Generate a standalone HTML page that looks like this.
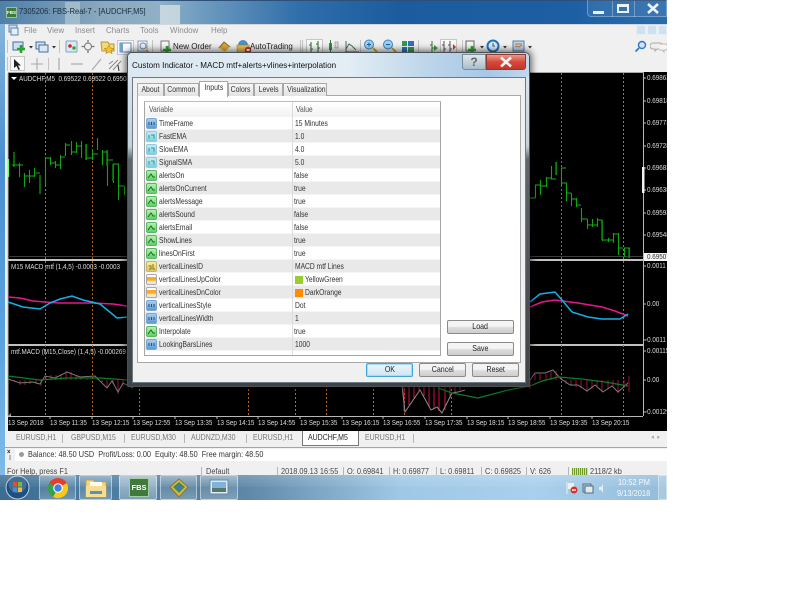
<!DOCTYPE html>
<html><head><meta charset="utf-8"><title>MT4</title>
<style>
html,body{margin:0;padding:0;background:#fff;width:800px;height:599px;overflow:hidden}
*{box-sizing:border-box}
#s{position:absolute;left:0;top:0;width:667px;height:500px;overflow:hidden;background:#f0f0f0;font-family:"Liberation Sans",sans-serif;font-size:7.9px;color:#333;filter:blur(.3px);--x:.85}
.a,.t{position:absolute}
.t{white-space:nowrap;line-height:10px;height:10px;transform:scaleX(var(--x));transform-origin:0 0}
.w{color:#dcdcdc;font-size:7.4px}
.m{color:#8c8c8c;font-size:8.4px;--x:.95}
.tb{color:#777;font-size:8.2px}
.st{color:#444;font-size:8px;--x:.92}
.sep{position:absolute;width:1px;background:#b5b5b5}
.r{position:absolute;left:145px;width:295px;height:13px;border-bottom:1px solid #f4f4f4}
.r.g{background:#e9e9e9}
.ic{position:absolute;left:146px;width:11px;height:11px;border-radius:2px}
.b{background:linear-gradient(#a9cdec,#5d9ad2);border:1px solid #7aa7d0}
.c{background:linear-gradient(#c2eef3,#79d0de);border:1px solid #8fcbd8}
.gr{background:linear-gradient(#b6f0b0,#5fd065);border:1px solid #5cb562}
.y{background:linear-gradient(#f7eda0,#dcc862);border:1px solid #c5b66a}
.o{background:linear-gradient(#fff 0 25%,#ffa830 25% 60%,#f3e040 60% 75%,#e8e8e8 75%);border:1px solid #aaa}
.ic svg{position:absolute;left:0;top:0}
.btn{position:absolute;border:1px solid #8b8b8b;border-radius:2px;background:linear-gradient(#f4f4f4 0 45%,#dcdcdc 55%,#cfcfcf);text-align:center;font-size:8.2px;line-height:12px;color:#222}
.tab{position:absolute;top:83px;height:13px;background:linear-gradient(#f6f6f6,#e2e2e2);border:1px solid #a8a8a8;border-bottom:0;text-align:center;font-size:8px;line-height:12px;color:#333}
.btn span,.tab span{display:inline-block;transform:scaleX(.86);transform-origin:50% 50%}
.tk{position:absolute;top:475px;height:25px;border:1px solid rgba(255,255,255,.45);border-radius:2px;background:linear-gradient(rgba(255,255,255,.32),rgba(255,255,255,.1) 50%,rgba(255,255,255,.22))}
</style></head><body>
<div id="s">
<!-- title bar -->
<div class="a" style="left:0;top:0;width:667px;height:24px;background:linear-gradient(90deg,#4f7fa8 0,#8aa8bd 15%,#8fb0c6 24%,#6f9cc0 30%,#2f6ea9 45%,#1c5c9e 60%,#1d5fa3 85%,#2a6cad 100%)"></div>
<div class="a" style="left:160px;top:5px;width:20px;height:19px;background:#d4e0e4;opacity:.8"></div>
<div class="a" style="left:65px;top:2px;width:15px;height:22px;background:#b9cfd9;opacity:.6"></div>
<div class="a" style="left:0;top:0;width:667px;height:1px;background:#2d4f78"></div>
<div class="a" style="left:6px;top:7px;width:11px;height:11px;background:#3b7d3a;border:1px solid #9cc09b;color:#fff;font-size:4.5px;line-height:9px;text-align:center;font-weight:bold">FBS</div>
<div class="t" style="left:19px;top:6px;color:#1b2b3a;font-size:8.6px;--x:.875">7305206: FBS-Real-7 - [AUDCHF,M5]</div>
<div class="a" style="left:587px;top:0;width:80px;height:17px;border:1px solid rgba(255,255,255,.3);border-top:0;border-radius:0 0 0 4px;background:rgba(255,255,255,.08)"></div>
<div class="a" style="left:612px;top:1px;width:1px;height:16px;background:rgba(255,255,255,.3)"></div>
<div class="a" style="left:634px;top:1px;width:1px;height:16px;background:rgba(255,255,255,.3)"></div>
<div class="a" style="left:593px;top:11px;width:11px;height:3px;background:#eaf1f7"></div>
<div class="a" style="left:617px;top:4px;width:12px;height:9px;border:2px solid #eaf1f7;border-top-width:3px"></div>
<svg class="a" style="left:646px;top:3px" width="14" height="11"><path d="M2 1 L12 10 M12 1 L2 10" stroke="#eef3f7" stroke-width="2.6"/></svg>

<!-- left frame -->
<div class="a" style="left:0;top:24px;width:5px;height:451px;background:linear-gradient(#84b5dc,#4a8fd0 30%,#5aa3e0 70%,#7fbbe8)"></div>
<div class="a" style="left:5px;top:24px;width:662px;height:1px;background:#cfd6dc"></div>

<!-- menu -->
<svg class="a" style="left:8px;top:24px" width="11" height="12"><rect x="1" y="1" width="8" height="7" fill="#cfe0f0" stroke="#5a86b5"/><rect x="3" y="4" width="7" height="7" fill="#e6eff8" stroke="#5a86b5"/></svg>
<div class="t m" style="left:24px;top:25px">File</div>
<div class="t m" style="left:47px;top:25px">View</div>
<div class="t m" style="left:75px;top:25px">Insert</div>
<div class="t m" style="left:106px;top:25px">Charts</div>
<div class="t m" style="left:140px;top:25px">Tools</div>
<div class="t m" style="left:170px;top:25px">Window</div>
<div class="t m" style="left:211px;top:25px">Help</div>
<div class="a" style="left:636px;top:25px;width:10px;height:10px;background:#cfe0ee;border:1px solid #e5eef5"></div>
<div class="a" style="left:647px;top:25px;width:10px;height:10px;background:#cfe0ee;border:1px solid #e5eef5"></div>
<div class="a" style="left:658px;top:25px;width:9px;height:10px;background:#cfe0ee;border:1px solid #e5eef5"></div>

<!-- toolbar icons -->
<svg class="a" style="left:5px;top:37px" width="660" height="36">
<g stroke="#c4c4c4"><path d="M2.500 3V16M54.500 3V16M147.500 3V16M295.500 3V16M297.500 3V16M355.500 3V16M413.500 3V16M457.500 3V16M2.500 20V34M43.500 21V33"/></g>
<rect x="112.500" y="3.500" width="16" height="14" fill="#f8f8f8" stroke="#c6c6c6"/>
<rect x="301.500" y="2.500" width="16" height="15" fill="#f8f8f8" stroke="#c6c6c6"/>
<rect x="435.500" y="2.500" width="16" height="15" fill="#f8f8f8" stroke="#c6c6c6"/>
<rect x="5.500" y="19.500" width="14" height="14" fill="#f8f8f8" stroke="#c6c6c6"/>
<rect x="8" y="5" width="10" height="8" fill="#cde0f2" stroke="#44709e"/><path d="M16 8V16M12 12H20" stroke="#2aa52a" stroke-width="2.6"/>
<path d="M24 9h4l-2 2.500z" fill="#333"/>
<rect x="31" y="5" width="9" height="7" fill="#cfe0f0" stroke="#44709e"/><rect x="34" y="8" width="9" height="7" fill="#dbe8f4" stroke="#44709e"/><path d="M47 9h4l-2 2.500z" fill="#333"/>
<rect x="61" y="4" width="11" height="11" rx="1" fill="#d8e8f6" stroke="#7ea3c5"/><circle cx="65" cy="9" r="1.800" fill="#d22"/><circle cx="69" cy="11" r="1.800" fill="#3a3"/>
<path d="M83 3V16M76.500 9.500H89.500" stroke="#777" stroke-width="1.300"/><circle cx="83" cy="9.500" r="3.500" fill="#eee" stroke="#777"/>
<path d="M96 5h7l1 2h5v7H97z" fill="#f2d975" stroke="#b5963c"/><path d="M104 8l1.500 3 3.200.5-2.300 2 .6 3-3-1.600-3 1.600.6-3-2.300-2 3.200-.5z" fill="#f4c430" stroke="#b08a20" stroke-width=".6"/>
<rect x="115" y="6" width="11" height="9" fill="#fff" stroke="#5d8abb"/><rect x="115" y="6" width="3" height="9" fill="#6fa3d6"/>
<rect x="133" y="4" width="9" height="10" fill="#eef2f6" stroke="#8ca0b5"/><circle cx="138" cy="9" r="3" fill="none" stroke="#6b8bb0"/><path d="M141 13l4 4" stroke="#c69a2c" stroke-width="1.600"/>
<rect x="156" y="4" width="8" height="10" fill="#f6f6f6" stroke="#777"/><path d="M162 9V17M158 13H166" stroke="#2aa52a" stroke-width="2.600"/>
<path d="M214 11l5-6 6 5-5 5z" fill="#dba83a" stroke="#8a6a1e"/><path d="M214 11l6 4 5-5" fill="none" stroke="#fbe9a8"/>
<circle cx="238" cy="8" r="5" fill="#4f8cc8"/><path d="M232 8h12v5a6 4 0 0 1-12 0z" fill="#e6c04d" stroke="#a2832a" stroke-width=".6"/><circle cx="243" cy="13" r="3.300" fill="#d92d20"/><rect x="241.600" y="12" width="3" height="2" fill="#fff"/>
<path d="M306 5V15M306 8h-2M306 12h2M313 4V15M313 7h-2M313 11h2" stroke="#3b6f3b" stroke-width="1.100" fill="none"/><path d="M303 16h13" stroke="#666"/>
<rect x="324" y="6" width="3" height="7" fill="#2f9e3a"/><path d="M325.500 3V16" stroke="#2f7a36"/><rect x="330" y="5" width="3" height="6" fill="#ddd" stroke="#888" stroke-width=".6"/><path d="M322 16h13" stroke="#666"/>
<path d="M341 15V4M341 15H354M341 12l3-5 3 2 4 4" stroke="#3f7050" fill="none"/>
<circle cx="364" cy="7.500" r="4.500" fill="#9cd0ee" stroke="#3d86c2"/><path d="M362 7.500h4M364 5.500v4" stroke="#1d5f9f"/><path d="M368 11l4 4" stroke="#c9a130" stroke-width="2"/>
<circle cx="383" cy="7.500" r="4.500" fill="#9cd0ee" stroke="#3d86c2"/><path d="M381 7.500h4" stroke="#1d5f9f"/><path d="M387 11l4 4" stroke="#c9a130" stroke-width="2"/>
<rect x="397" y="4" width="5" height="5" fill="#2f9a55"/><rect x="403" y="4" width="6" height="5" fill="#2f6fc0"/><rect x="397" y="10" width="5" height="5" fill="#2f6fc0"/><rect x="403" y="10" width="6" height="5" fill="#2f9a55"/>
<path d="M427 4V15M427 8h-2M427 11h2" stroke="#3b6f3b" fill="none"/><path d="M421 16h13" stroke="#666"/><path d="M429 8l4 3-4 3z" fill="#3a9a3a"/>
<path d="M439 4V16M439 8h-2M439 12h2M445 4V16M445 8h-2M445 12h2" stroke="#555" fill="none"/><path d="M448 7l3 3-3 3z" fill="#d23d2a"/>
<rect x="461" y="4" width="8" height="10" fill="#f4f4f4" stroke="#666"/><path d="M467 9V17M463 13H471" stroke="#2aa52a" stroke-width="2.600"/><path d="M475 9h4l-2 2.500z" fill="#333"/>
<circle cx="488" cy="9" r="5.500" fill="#dcebf7" stroke="#1d74bc" stroke-width="2"/><path d="M488 6v3h2" stroke="#1d5f9f" fill="none"/><path d="M498 9h4l-2 2.500z" fill="#333"/>
<rect x="508" y="4" width="11" height="10" fill="#bcd5ec" stroke="#5d7ea0"/><path d="M510 7h7M510 10l2-1 2 1 3-2" stroke="#b67a2e" fill="none"/><path d="M523 9h4l-2 2.500z" fill="#333"/>
<path d="M9 22V31l2.500-2 2 4 1.500-.8-2-3.700h3z" fill="#222"/>
<path d="M32 21V33M26 27H38" stroke="#aaa" stroke-width="1.100"/>
<path d="M54 21V33" stroke="#aaa" stroke-width="1.200"/><path d="M66 27H78" stroke="#aaa" stroke-width="1.200"/><path d="M87 33L96 22" stroke="#aaa" stroke-width="1.200"/>
<path d="M104 32l9-9M108 33l8-9M104 27l4-3" stroke="#888" fill="none"/><path d="M113 28l1 6" stroke="#333"/>
<circle cx="637" cy="8" r="3.500" fill="#cfe4f6" stroke="#2f78c2" stroke-width="1.400"/><path d="M634 11l-3.500 3.500" stroke="#2f78c2" stroke-width="1.800"/>
</svg>
<div class="t tb" style="left:173px;top:41px;color:#222;font-size:8.6px;--x:.93">New Order</div>
<div class="t tb" style="left:250px;top:41px;color:#222;font-size:8.6px;--x:.92">AutoTrading</div>
<svg class="a" style="left:650px;top:41px" width="17" height="12"><path d="M3 2h7a2 2 0 0 1 0 6H7l-2 2V8H3a2 2 0 0 1 0-6z" fill="#eee" stroke="#aaa"/><path d="M10 3h5a2 2 0 0 1 0 6h-1v2l-2-2h-3" fill="#f4f4f4" stroke="#bbb"/></svg>

<!-- chart -->
<div class="a" style="left:8px;top:72px;width:659px;height:359px;background:#000"></div>
<div class="a" style="left:8px;top:72px;width:636px;height:1px;background:#a8a8a8"></div>
<svg class="a" style="left:0;top:0" width="667" height="432" fill="none">
<path d="M8 73V416M643.500 73V416M8 416.500H643" stroke="#b8b8b8"/>
<path d="M8 256.500H643" stroke="#3c3c3c"/>
<path d="M8 260H643M8 345H643" stroke="#c0c0c0" stroke-width="2"/>
<g stroke-dasharray="2 2">
<path d="M45.500 73V416M139.500 73V416M295.500 73V416M373.500 73V416M451.500 73V416M623.500 73V416" stroke="#7c8a1a"/>
<path d="M92.500 73V416M248.500 73V416M326.500 73V416M404.500 73V416M561.500 73V416" stroke="#b5640e"/>
</g>
<path d="M8.500 159V177" stroke="#66ff66" stroke-width="1.200"/>
<path stroke="#0fa50f" stroke-width="1.100" d="M19.500 163V177M24.500 173V187M29.500 170V183M34.500 168V177M45.500 158V186M50.500 157V165M55.500 161V168M60.500 155V169M65.500 143V156M71.500 141V155M76.500 142V153M81.500 141V158M86.500 144V160M92.500 149V160M97.500 138V150M102.500 150V165M107.500 150V186M113.500 164V183M118.500 164V200M124.500 186V195"/>
<path stroke="#0a7a0a" stroke-width="1.600" d="M14 152V167M40 175V194M86 144V160M107 150V166M113 164V181"/>
<path stroke="#12b012" stroke-width="1" d="M12 165h7M19 165h4M24 176h6M29 176h5M36 173h4M45 158h6M50 163h5M55 165h5M60 157h5M65 145h5M71 152h5M76 146h6M86 158h6M92 154h6M102 152h5M107 160h6M113 164h6M118 186h6"/>
<path stroke="#0fa50f" stroke-width="1.100" d="M535.500 185V198M540.500 180V195M546.500 177V187M551.500 166V179M556.500 162V175M561.500 168V185M566.500 183V201M571.500 193V206M576.500 198V207M581.500 208V222M587.500 219V229M592.500 219V227M597.500 218V227M602.500 220V241M608.500 238V242M613.500 233V243M618.500 233V255M624.500 248V257M629.500 248V258"/>
<path stroke="#0a7a0a" stroke-width="1.600" d="M556 162V175M602 220V240M629 248V258"/>
<path stroke="#12b012" d="M530 198h5M535 185h6M541 186h5M546 178h5M551 179h5M561 168h5M561 183h6M566 193h5M571 199h5M576 205h5M581 219h6M587 225h5M592 225h5M597 220h5M602 240h6M608 240h5M613 234h5M618 248h5M624 248h6"/>
<path stroke="#e8168c" stroke-width="1.500" d="M8 297L20 298L33 301L45 302L60 303L93 303L113 304L127 306"/>
<path stroke="#12b2e8" stroke-width="1.500" d="M8 302L23 307L40 309L50 303L60 299L72 296L83 300L100 304L117 318L128 317"/>
<path stroke="#e8168c" stroke-width="1.500" d="M530 307L542 302L555 300L578 303L602 307L615 311L628 316"/>
<path stroke="#12b2e8" stroke-width="1.500" d="M530 302L540 294L555 292L562 300L572 312L588 317L602 319L620 319L628 314"/>
<path stroke="#a01235" d="M14.500 380V381M20 380V385M25 380V385M30 380V384M36 380V384M41 380V386M46 380V376M51 380V375M56 380V375M61 380V374M66 380V371M71 380V372M76 380V375M81 380V377M87 380V379M97 380V377M102 380V382M107 380V388M113 380V384M118 380V394M123 380V386M128 380V388"/>
<path stroke="#a01235" d="M530 380V389M535 380V374M540 380V374M546 380V374M551 380V372M556 380V371M561 380V378M566 380V384M571 380V386M576 380V387M581 380V388M587 380V392M592 380V389M597 380V387M602 380V392M608 380V389M613 380V387M618 380V393M624 380V388M629 376V392"/>
<path stroke="#c2153f" stroke-width="1.100" d="M404 387V411M409 387V405M414 387V398M419 387V392M424 387V396M429 387V407M434 387V409M439 387V411M445 387V410M450 387V398M455 387V392M460 387V390"/>
<path stroke="#7a7a7a" d="M8 379L20 383L33 382L40 384L45 376L55 378L67 372L80 377L95 376L107 388L112 381L118 392L123 383L133 388"/>
<path stroke="#7a7a7a" d="M525 387L535 373L545 373L553 370L560 378L570 385L578 385L587 391L595 385L603 392L612 386L618 392L628 383"/>
<path stroke="#8d8d8d" d="M402 386L405 412L420 390L431 410L437 407L442 413L452 393L458 392L465 390"/>
<path stroke="#0f7d22" stroke-width="1.200" d="M8 376L40 380L67 378L100 378L128 380"/>
<path stroke="#0f7d22" stroke-width="1.200" d="M438 388L452 393L478 398L508 390L530 386L542 381L558 377L582 379L605 382L628 386"/>
<path d="M8 416l3-3v3z" fill="#8a96b0"/>
<g stroke="#bbb"><path d="M50 416V419M92 416V419M133 416V419M175 416V419M217 416V419M258 416V419M300 416V419M342 416V419M383 416V419M425 416V419M467 416V419M508 416V419M550 416V419M592 416V419M643 78H646M643 101H646M643 123H646M643 146H646M643 168H646M643 190H646M643 213H646M643 235H646M643 266H646M643 304H646M643 340H646M643 351H646M643 380H646M643 412H646"/></g>
<rect x="642" y="167" width="2.500" height="26" fill="#f2f2f2"/>
<path d="M11 77h6l-3 3z" fill="#fff"/>
</svg>
<div class="t w" style="left:19px;top:74px">AUDCHF,M5&nbsp; 0.69522 0.69522 0.69503</div>
<div class="t w" style="left:11px;top:262px">M15 MACD mtf (1,4,5) -0.0003 -0.0003</div>
<div class="t w" style="left:11px;top:347px">mtf.MACD (M15,Close) (1,4,5) -0.000269</div>
<div class="t w" style="left:647px;top:73px">0.69863</div>
<div class="t w" style="left:647px;top:96px">0.69818</div>
<div class="t w" style="left:647px;top:118px">0.69773</div>
<div class="t w" style="left:647px;top:141px">0.69728</div>
<div class="t w" style="left:647px;top:163px">0.69683</div>
<div class="t w" style="left:647px;top:185px">0.69638</div>
<div class="t w" style="left:647px;top:208px">0.69593</div>
<div class="t w" style="left:647px;top:230px">0.69548</div>
<div class="a" style="left:644px;top:253px;width:23px;height:8px;background:#f4f4f4"></div>
<div class="t" style="left:647px;top:252px;color:#333;font-size:7.4px">0.69507</div>
<div class="t w" style="left:647px;top:261px">0.0011</div>
<div class="t w" style="left:647px;top:299px">0.00</div>
<div class="t w" style="left:645px;top:335px">-0.0011</div>
<div class="t w" style="left:647px;top:346px">0.00115</div>
<div class="t w" style="left:647px;top:375px">0.00</div>
<div class="t w" style="left:645px;top:407px">-0.00129</div>
<div class="t w" style="left:8px;top:418px">13 Sep 2018</div>
<div class="t w" style="left:50px;top:418px">13 Sep 11:35</div>
<div class="t w" style="left:92px;top:418px">13 Sep 12:15</div>
<div class="t w" style="left:133px;top:418px">13 Sep 12:55</div>
<div class="t w" style="left:175px;top:418px">13 Sep 13:35</div>
<div class="t w" style="left:217px;top:418px">13 Sep 14:15</div>
<div class="t w" style="left:258px;top:418px">13 Sep 14:55</div>
<div class="t w" style="left:300px;top:418px">13 Sep 15:35</div>
<div class="t w" style="left:342px;top:418px">13 Sep 16:15</div>
<div class="t w" style="left:383px;top:418px">13 Sep 16:55</div>
<div class="t w" style="left:425px;top:418px">13 Sep 17:35</div>
<div class="t w" style="left:467px;top:418px">13 Sep 18:15</div>
<div class="t w" style="left:508px;top:418px">13 Sep 18:55</div>
<div class="t w" style="left:550px;top:418px">13 Sep 19:35</div>
<div class="t w" style="left:592px;top:418px">13 Sep 20:15</div>

<!-- tab row -->
<div class="a" style="left:5px;top:431px;width:662px;height:17px;background:#f0f0f0;border-bottom:1px solid #a5a5a5"></div>
<div class="t tb" style="left:16px;top:433px">EURUSD,H1</div><div class="sep" style="left:62px;top:434px;height:9px"></div>
<div class="t tb" style="left:71px;top:433px">GBPUSD,M15</div><div class="sep" style="left:124px;top:434px;height:9px"></div>
<div class="t tb" style="left:131px;top:433px">EURUSD,M30</div><div class="sep" style="left:184px;top:434px;height:9px"></div>
<div class="t tb" style="left:191px;top:433px">AUDNZD,M30</div><div class="sep" style="left:246px;top:434px;height:9px"></div>
<div class="t tb" style="left:253px;top:433px">EURUSD,H1</div>
<div class="a" style="left:302px;top:431px;width:57px;height:15px;background:#fff;border:1px solid #777;border-top:0"></div>
<div class="t" style="left:308px;top:433px;color:#222;font-size:8.2px">AUDCHF,M5</div>
<div class="t tb" style="left:365px;top:433px">EURUSD,H1</div><div class="sep" style="left:413px;top:434px;height:9px"></div>
<div class="t" style="left:651px;top:433px;color:#aaa;font-size:7px">◂&nbsp;&nbsp;▸</div>

<!-- balance row -->
<div class="a" style="left:15px;top:449px;width:652px;height:12px;background:#fff"></div>
<div class="a" style="left:5px;top:449px;width:10px;height:12px;background:#f0f0f0"></div>
<div class="t" style="left:7px;top:448px;color:#222;font-size:7px;font-weight:bold">×</div>
<div class="a" style="left:9px;top:455px;width:2px;height:5px;background:#bbb"></div>
<div class="a" style="left:19px;top:452px;width:5px;height:5px;border-radius:3px;background:#999"></div>
<div class="t st" style="left:28px;top:449px;color:#333;font-size:8.3px;--x:.88">Balance: 48.50 USD&nbsp; Profit/Loss: 0.00&nbsp; Equity: 48.50&nbsp; Free margin: 48.50</div>

<!-- status row -->
<div class="a" style="left:5px;top:461px;width:662px;height:14px;background:#f0f0f0"></div>
<div class="t st" style="left:7px;top:467px">For Help, press F1</div>
<div class="sep" style="left:201px;top:467px;height:8px"></div><div class="t st" style="left:206px;top:467px">Default</div>
<div class="sep" style="left:277px;top:467px;height:8px"></div><div class="t st" style="left:281px;top:467px">2018.09.13 16:55</div>
<div class="sep" style="left:343px;top:467px;height:8px"></div><div class="t st" style="left:347px;top:467px">O: 0.69841</div>
<div class="sep" style="left:389px;top:467px;height:8px"></div><div class="t st" style="left:393px;top:467px">H: 0.69877</div>
<div class="sep" style="left:436px;top:467px;height:8px"></div><div class="t st" style="left:440px;top:467px">L: 0.69811</div>
<div class="sep" style="left:481px;top:467px;height:8px"></div><div class="t st" style="left:485px;top:467px">C: 0.69825</div>
<div class="sep" style="left:526px;top:467px;height:8px"></div><div class="t st" style="left:530px;top:467px">V: 626</div>
<div class="sep" style="left:568px;top:467px;height:8px"></div>
<div class="a" style="left:572px;top:468px;width:16px;height:7px;background:repeating-linear-gradient(90deg,#6f9a2e 0 1px,#cfe0a0 1px 2px)"></div>
<div class="t st" style="left:590px;top:467px">2118/2 kb</div>

<!-- taskbar -->
<div class="a" style="left:0;top:475px;width:667px;height:25px;background:linear-gradient(90deg,#3c6d92 0,#4e7fa3 18%,#567f9e 30%,#5f88a8 37%,#7ea7c6 48%,#9fc8e6 60%,#a9d0ec 80%,#94bcd9 100%)"></div>
<div class="a" style="left:0;top:475px;width:667px;height:12px;background:linear-gradient(rgba(255,255,255,.18),rgba(255,255,255,.04))"></div>
<svg class="a" style="left:5px;top:475px" width="26" height="25"><circle cx="12.500" cy="12.500" r="11.500" fill="#1c4f82" stroke="#b9d0e3"/><circle cx="12.500" cy="9" r="9" fill="#fff" opacity=".18"/><rect x="8" y="7" width="4" height="4.500" fill="#e2502d"/><rect x="13" y="7" width="4" height="4.500" fill="#7ab83a"/><rect x="8" y="12.500" width="4" height="4.500" fill="#3d8fe0"/><rect x="13" y="12.500" width="4" height="4.500" fill="#f2c02f"/></svg>
<div class="tk" style="left:39px;width:37px"></div>
<div class="tk" style="left:79px;width:33px"></div>
<div class="tk" style="left:119px;width:38px;background:linear-gradient(rgba(255,255,255,.5),rgba(255,255,255,.25))"></div>
<div class="tk" style="left:160px;width:37px"></div>
<div class="tk" style="left:200px;width:38px"></div>
<svg class="a" style="left:46px;top:476px" width="24" height="24"><circle cx="12" cy="12" r="10" fill="#e43e2b"/><path d="M12 12L20.700 7A10 10 0 0 1 7 20.700z" fill="#f8c91c"/><path d="M12 12L7 20.700A10 10 0 0 1 3.300 7z" fill="#2fa44f"/><circle cx="12" cy="12" r="4.800" fill="#fff"/><circle cx="12" cy="12" r="3.700" fill="#3c80e6"/></svg>
<svg class="a" style="left:84px;top:478px" width="24" height="20"><path d="M2 2h7l2 2h11v15H2z" fill="#f2d77e" stroke="#c2a34a"/><rect x="6" y="4" width="12" height="5" fill="#fdfdf2"/><rect x="2" y="8" width="20" height="11" fill="#f6de90"/><rect x="6" y="13" width="12" height="3" fill="#5c90c0"/></svg>
<div class="a" style="left:129px;top:478px;width:20px;height:19px;background:#3f7a3a;border:1px solid #a8c8a6;color:#fff;font-size:7.5px;line-height:17px;text-align:center;font-weight:bold">FBS</div>
<svg class="a" style="left:168px;top:477px" width="22" height="22"><path d="M2 10L11 2l9 8-9 10z" fill="#d9b64a" stroke="#8d7526"/><path d="M5 10l6-5 6 5-6 6z" fill="#3f8d4f"/><circle cx="11" cy="10" r="2.500" fill="#3b78c0"/></svg>
<svg class="a" style="left:209px;top:478px" width="20" height="18"><rect x="1" y="2" width="18" height="14" fill="#dbeaf4" stroke="#6b8ba5"/><rect x="3" y="4" width="14" height="6" fill="#7fb3d9"/><rect x="3" y="10" width="14" height="4" fill="#55786a"/></svg>
<svg class="a" style="left:565px;top:481px" width="44" height="14"><path d="M2 1V13" stroke="#eee"/><path d="M3 2h6v6H3z" fill="#f0f0f0"/><circle cx="9" cy="9" r="3.500" fill="#d6332a"/><rect x="7" y="8.300" width="4" height="1.400" fill="#fff"/><rect x="18" y="3" width="8" height="8" fill="none" stroke="#333" stroke-opacity=".6"/><rect x="20" y="5" width="8" height="7" fill="#dfe9f0" stroke="#4f6a7d"/><path d="M34 6h2l2-3v9l-2-3h-2z" fill="#e4edf3"/></svg>
<div class="t" style="left:618px;top:477px;color:#f6f9fb;font-size:8.3px;--x:.9">10:52 PM</div>
<div class="t" style="left:617px;top:488px;color:#f6f9fb;font-size:8.3px;--x:.9">9/13/2018</div>
<div class="a" style="left:658px;top:475px;width:9px;height:25px;background:rgba(255,255,255,.18);border:1px solid rgba(255,255,255,.4)"></div>

<!-- dialog -->
<div class="a" style="left:127px;top:52px;width:403px;height:335px;border-radius:5px 5px 2px 2px;background:linear-gradient(#bcd6ea 0,#d5e4ef 8%,#c4d0d8 28%,#5f666c 32%,#3e4347 100%);box-shadow:0 0 7px 2px rgba(0,0,0,.55);border:1px solid #4a5055"></div>
<div class="a" style="left:128px;top:53px;width:401px;height:24px;border-radius:4px 4px 0 0;background:linear-gradient(90deg,#dbe8f1,#e3edf4 55%,#bcd5ea 75%,#a6c8e6 90%,#c0d8ec)"></div>
<div class="t" style="left:132px;top:60px;color:#111;font-size:8.7px;--x:.93">Custom Indicator - MACD mtf+alerts+vlines+interpolation</div>
<div class="a" style="left:462px;top:54px;width:24px;height:16px;border:1px solid #7a8b99;border-radius:0 0 0 3px;background:linear-gradient(#dfe8ef,#a9bdcc);color:#666;font-size:12px;line-height:14px;text-align:center;font-weight:bold">?</div>
<div class="a" style="left:486px;top:54px;width:40px;height:16px;border:1px solid #8c3b33;border-radius:0 0 3px 0;background:linear-gradient(#e89a8e,#d6483a 50%,#c5362a)"></div>
<svg class="a" style="left:499px;top:56px" width="14" height="12"><path d="M2 1.500L12 10.500M12 1.500L2 10.500" stroke="#f4f4f4" stroke-width="2.600"/></svg>
<div class="a" style="left:132px;top:77px;width:394px;height:306px;background:#f0f0f0;border:1px solid #6c7a84"></div>
<div class="a" style="left:137px;top:95px;width:384px;height:268px;background:#fff;border:1px solid #a8a8a8"></div>
<div class="tab" style="left:137px;width:27px"><span>About</span></div>
<div class="tab" style="left:164px;width:35px"><span>Common</span></div>
<div class="tab" style="left:199px;top:81px;width:29px;height:16px;background:#fff;z-index:2"><span>Inputs</span></div>
<div class="tab" style="left:228px;width:26px"><span>Colors</span></div>
<div class="tab" style="left:254px;width:29px"><span>Levels</span></div>
<div class="tab" style="left:283px;width:44px"><span>Visualization</span></div>

<!-- grid -->
<div class="a" style="left:144px;top:101px;width:297px;height:255px;background:#fff;border:1px solid #a6a6a6;border-top-color:#bcbcbc"></div>
<div class="a" style="left:145px;top:102px;width:295px;height:15px;background:linear-gradient(#fff,#f1f1f1)"></div>
<div class="t" style="left:149px;top:105px;color:#555">Variable</div>
<div class="t" style="left:296px;top:105px;color:#555">Value</div>
<div class="r" style="top:117px"></div>
<div class="r g" style="top:130px"></div>
<div class="r" style="top:143px"></div>
<div class="r g" style="top:156px"></div>
<div class="r" style="top:169px"></div>
<div class="r g" style="top:182px"></div>
<div class="r" style="top:195px"></div>
<div class="r g" style="top:208px"></div>
<div class="r" style="top:221px"></div>
<div class="r g" style="top:234px"></div>
<div class="r" style="top:247px"></div>
<div class="r g" style="top:260px"></div>
<div class="r" style="top:273px"></div>
<div class="r g" style="top:286px"></div>
<div class="r" style="top:299px"></div>
<div class="r g" style="top:312px"></div>
<div class="r" style="top:325px"></div>
<div class="r g" style="top:338px"></div>
<div class="a" style="left:292px;top:102px;width:1px;height:253px;background:#dcdcdc"></div>

<!-- icons -->
<div class="ic b" style="top:118px"><svg width="9" height="9"><path d="M2 6V3M4.500 6V3M7 6V3" stroke="#24528a"/></svg></div>
<div class="ic c" style="top:131px"><svg width="9" height="9"><path d="M2 6.500V3M4 3h3v3.500" stroke="#3a8fa3" fill="none"/></svg></div>
<div class="ic c" style="top:144px"><svg width="9" height="9"><path d="M2 6.500V3M4 3h3v3.500" stroke="#3a8fa3" fill="none"/></svg></div>
<div class="ic c" style="top:157px"><svg width="9" height="9"><path d="M2 6.500V3M4 3h3v3.500" stroke="#3a8fa3" fill="none"/></svg></div>
<div class="ic gr" style="top:170px"><svg width="9" height="9"><path d="M1 7L4 3l2 3h2" stroke="#126f22" fill="none"/></svg></div>
<div class="ic gr" style="top:183px"><svg width="9" height="9"><path d="M1 7L4 3l2 3h2" stroke="#126f22" fill="none"/></svg></div>
<div class="ic gr" style="top:196px"><svg width="9" height="9"><path d="M1 7L4 3l2 3h2" stroke="#126f22" fill="none"/></svg></div>
<div class="ic gr" style="top:209px"><svg width="9" height="9"><path d="M1 7L4 3l2 3h2" stroke="#126f22" fill="none"/></svg></div>
<div class="ic gr" style="top:222px"><svg width="9" height="9"><path d="M1 7L4 3l2 3h2" stroke="#126f22" fill="none"/></svg></div>
<div class="ic gr" style="top:235px"><svg width="9" height="9"><path d="M1 7L4 3l2 3h2" stroke="#126f22" fill="none"/></svg></div>
<div class="ic gr" style="top:248px"><svg width="9" height="9"><path d="M1 7L4 3l2 3h2" stroke="#126f22" fill="none"/></svg></div>
<div class="ic y" style="top:261px"><svg width="9" height="9"><path d="M1.500 4h2.500v3H2M6 2v5h2" stroke="#8a7420" fill="none"/></svg></div>
<div class="ic o" style="top:274px"></div>
<div class="ic o" style="top:287px"></div>
<div class="ic b" style="top:300px"><svg width="9" height="9"><path d="M2 6V3M4.500 6V3M7 6V3" stroke="#24528a"/></svg></div>
<div class="ic b" style="top:313px"><svg width="9" height="9"><path d="M2 6V3M4.500 6V3M7 6V3" stroke="#24528a"/></svg></div>
<div class="ic gr" style="top:326px"><svg width="9" height="9"><path d="M1 7L4 3l2 3h2" stroke="#126f22" fill="none"/></svg></div>
<div class="ic b" style="top:339px"><svg width="9" height="9"><path d="M2 6V3M4.500 6V3M7 6V3" stroke="#24528a"/></svg></div>

<!-- labels -->
<div class="t" style="left:159px;top:119px">TimeFrame</div><div class="t" style="left:295px;top:119px">15 Minutes</div>
<div class="t" style="left:159px;top:132px">FastEMA</div><div class="t" style="left:295px;top:132px">1.0</div>
<div class="t" style="left:159px;top:145px">SlowEMA</div><div class="t" style="left:295px;top:145px">4.0</div>
<div class="t" style="left:159px;top:158px">SignalSMA</div><div class="t" style="left:295px;top:158px">5.0</div>
<div class="t" style="left:159px;top:171px">alertsOn</div><div class="t" style="left:294px;top:171px">false</div>
<div class="t" style="left:159px;top:184px">alertsOnCurrent</div><div class="t" style="left:294px;top:184px">true</div>
<div class="t" style="left:159px;top:197px">alertsMessage</div><div class="t" style="left:294px;top:197px">true</div>
<div class="t" style="left:159px;top:210px">alertsSound</div><div class="t" style="left:294px;top:210px">false</div>
<div class="t" style="left:159px;top:223px">alertsEmail</div><div class="t" style="left:294px;top:223px">false</div>
<div class="t" style="left:159px;top:236px">ShowLines</div><div class="t" style="left:294px;top:236px">true</div>
<div class="t" style="left:159px;top:249px">linesOnFirst</div><div class="t" style="left:294px;top:249px">true</div>
<div class="t" style="left:159px;top:262px">verticalLinesID</div><div class="t" style="left:295px;top:262px">MACD mtf Lines</div>
<div class="t" style="left:159px;top:275px">verticalLinesUpColor</div><div class="a" style="left:295px;top:276px;width:8px;height:8px;background:#9acd32"></div><div class="t" style="left:305px;top:275px">YellowGreen</div>
<div class="t" style="left:159px;top:288px">verticalLinesDnColor</div><div class="a" style="left:295px;top:289px;width:8px;height:8px;background:#ff8c00"></div><div class="t" style="left:305px;top:288px">DarkOrange</div>
<div class="t" style="left:159px;top:301px">verticalLinesStyle</div><div class="t" style="left:295px;top:301px">Dot</div>
<div class="t" style="left:159px;top:314px">verticalLinesWidth</div><div class="t" style="left:295px;top:314px">1</div>
<div class="t" style="left:159px;top:327px">Interpolate</div><div class="t" style="left:294px;top:327px">true</div>
<div class="t" style="left:159px;top:340px">LookingBarsLines</div><div class="t" style="left:295px;top:340px">1000</div>

<!-- buttons -->
<div class="btn" style="left:447px;top:320px;width:67px;height:14px"><span>Load</span></div>
<div class="btn" style="left:447px;top:342px;width:67px;height:14px"><span>Save</span></div>
<div class="btn" style="left:366px;top:363px;width:47px;height:14px;border-color:#3fa6dc;box-shadow:inset 0 0 0 1px #a6dcf5;background:linear-gradient(#eaf5fb,#cfe4f0)"><span>OK</span></div>
<div class="btn" style="left:419px;top:363px;width:47px;height:14px"><span>Cancel</span></div>
<div class="btn" style="left:472px;top:363px;width:47px;height:14px"><span>Reset</span></div>
</div>
</body></html>
